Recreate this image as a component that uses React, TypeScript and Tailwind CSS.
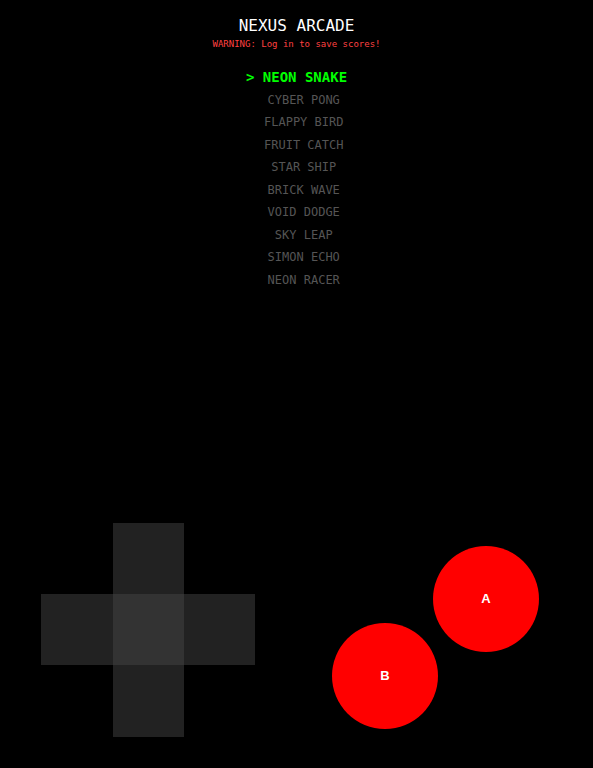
const games = [
  "NEON SNAKE",
  "CYBER PONG",
  "FLAPPY BIRD",
  "FRUIT CATCH",
  "STAR SHIP",
  "BRICK WAVE",
  "VOID DODGE",
  "SKY LEAP",
  "SIMON ECHO",
  "NEON RACER",
];

const mono = { fontFamily: '"DejaVu Sans Mono", "Liberation Mono", monospace' };

export default function App() {
  const selected = 0;

  return (
    <main className="h-[768px] w-full bg-black flex flex-col overflow-hidden" style={mono}>
      {/* Заголовок */}
      <div className="pt-[14px] text-center">
        <h1 className="text-[16px] leading-[24px] text-white">NEXUS ARCADE</h1>
        <p className="text-[9px] leading-[12px] text-[#ff4040]">WARNING: Log in to save scores!</p>
      </div>

      {/* Меню игр */}
      <ul className="mt-[16px] flex flex-col items-center">
        {games.map((game, i) => (
          <li
            key={game}
            className={`h-[22.5px] flex items-center whitespace-pre ${
              i === selected ? "text-[14px] font-bold text-[#00ff00]" : "text-[12px] text-[#555]"
            }`}
          >
            <span className={i === selected ? "" : "invisible"}>{"> "}</span>
            {game}
          </li>
        ))}
      </ul>

      {/* Управление */}
      <div className="mt-auto flex items-end justify-between pl-[41px] pr-[54px] pb-[31px]">
        <div className="grid grid-cols-[72px_71px_71px] grid-rows-[71px_71px_72px]">
          <div />
          <div className="bg-[#222]" />
          <div />
          <div className="bg-[#222]" />
          <div className="bg-[#333]" />
          <div className="bg-[#222]" />
          <div />
          <div className="bg-[#222]" />
          <div />
        </div>

        <div className="flex h-[183px] mb-[8px]">
          <button
            className="self-end w-[106px] h-[106px] rounded-full bg-[#ff0000] text-white text-[13px] font-bold"
            style={{ fontFamily: '"Liberation Sans", Arial, sans-serif' }}
          >
            B
          </button>
          <button
            className="self-start -ml-[5px] w-[106px] h-[106px] rounded-full bg-[#ff0000] text-white text-[13px] font-bold"
            style={{ fontFamily: '"Liberation Sans", Arial, sans-serif' }}
          >
            A
          </button>
        </div>
      </div>
    </main>
  );
}
